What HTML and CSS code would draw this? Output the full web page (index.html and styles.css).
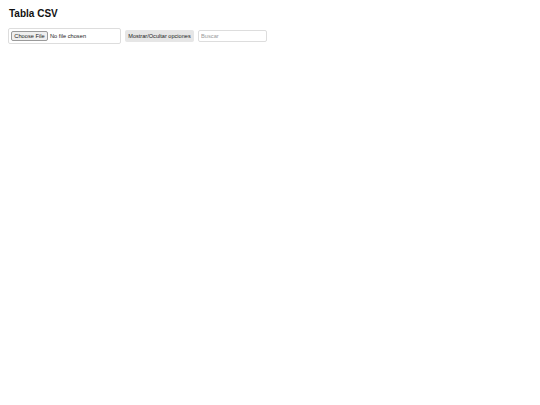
FILE: index.html
```html
<!DOCTYPE html>
<html lang="es">
<head>
<meta charset="utf-8">
<title>Tabla CSV</title>
<link rel="stylesheet" href="styles.css">
</head>
<body>
<h1 class="title">Tabla CSV</h1>
<div class="controls">
  <label class="file-box">
    <input class="file-input" type="file" accept=".csv">
  </label>
  <button class="toggle-btn" type="button">Mostrar/Ocultar opciones</button>
  <input class="search" type="text" placeholder="Buscar">
</div>
</body>
</html>
```
FILE: styles.css
```css
html, body {
  background: #ffffff;
}
body {
  margin: 8px;
  font-family: "Liberation Sans", Arial, sans-serif;
  color: #000;
}
.title {
  margin: 0;
  padding-left: 1px;
  font-size: 10px;
  line-height: 12px;
  font-weight: bold;
  color: #111;
}
.controls {
  display: flex;
  align-items: center;
  gap: 4px;
  margin-top: 8px;
}
.file-box {
  display: flex;
  align-items: center;
  box-sizing: border-box;
  width: 113px;
  height: 16px;
  padding: 0 2px;
  border: 1px solid #dddddd;
  border-radius: 2px;
  background: #fff;
}
.file-input {
  font-family: "Liberation Sans", Arial, sans-serif;
  font-size: 5.7px;
  color: #222;
  width: 105px;
  height: 10px;
  padding: 0;
  margin: 0;
}
.file-input::file-selector-button {
  font-family: "Liberation Sans", Arial, sans-serif;
  font-size: 5.7px;
  height: 10px;
  width: 37px;
  padding: 0;
  margin: 0 2px 0 0;
  border: 1px solid #9a9a9a;
  border-radius: 2px;
  background: #efefef;
  color: #222;
}
.toggle-btn {
  box-sizing: border-box;
  width: 69px;
  height: 12px;
  padding: 0;
  border: none;
  border-radius: 2px;
  background: #e6e6e6;
  font-family: "Liberation Sans", Arial, sans-serif;
  font-size: 5.6px;
  color: #222;
}
.search {
  box-sizing: border-box;
  width: 69px;
  height: 12px;
  margin: 0;
  padding: 0 2px;
  border: 1px solid #dddddd;
  border-radius: 2px;
  font-family: "Liberation Sans", Arial, sans-serif;
  font-size: 5.7px;
  color: #222;
  outline: none;
}
.search::placeholder {
  color: #9a9a9a;
}
```
